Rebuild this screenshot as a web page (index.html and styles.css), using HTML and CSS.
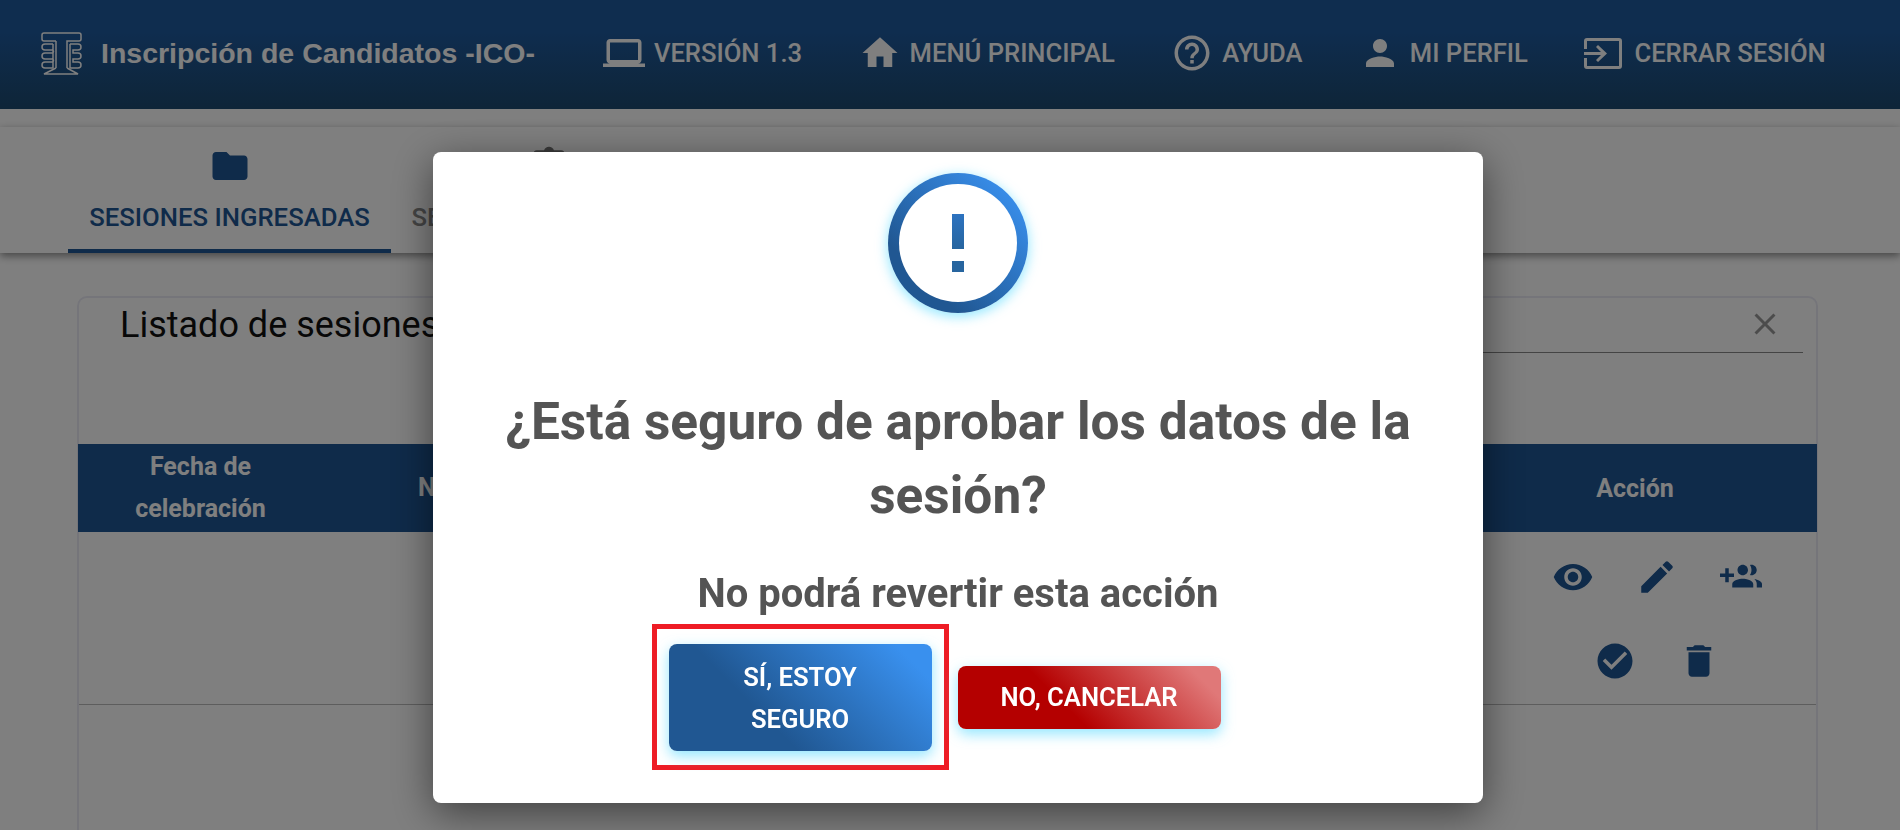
FILE: index.html
```html
<!DOCTYPE html>
<html lang="es">
<head>
    <meta charset="UTF-8">
    <meta name="viewport" content="width=device-width, initial-scale=1.0">
    <title>Inscripción de Candidatos -ICO-</title>
    <link rel="stylesheet" href="styles.css">
</head>
<body>
    <!-- Barra superior -->
    <header class="topbar">
        <div class="brand">
            <svg class="brand-logo" viewBox="0 0 41 43">
                <path d="M15 9H3Q1 9 1 7V3Q1 1 3 1H38Q40 1 40 3V7Q40 9 38 9H26V36M15 9V36"/>
                <path d="M12 12H4a3 3 0 0 0 0 6h7a1.5 1.5 0 0 1 0 3H4a3 3 0 0 0 0 6h7a1.5 1.5 0 0 1 0 3H4a3 3 0 0 0 0 6h8V12"/>
                <path d="M29 12h8a3 3 0 0 1 0 6h-5v3h5a3 3 0 0 1 0 6h-5v3h5a3 3 0 0 1 0 6h-8V12"/>
                <path d="M15 36L3 42H37L26 36"/>
            </svg>
            <span class="brand-name">Inscripción de Candidatos -ICO-</span>
        </div>
        <nav class="topnav">
            <a class="topnav-item"><svg viewBox="0 0 24 24"><path d="M20 18c1.1 0 2-.9 2-2V6c0-1.1-.9-2-2-2H4c-1.1 0-2 .9-2 2v10c0 1.1.9 2 2 2H0v2h24v-2h-4zM4 6h16v10H4V6z"/></svg>VERSIÓN 1.3</a>
            <a class="topnav-item"><svg viewBox="0 0 24 24"><path d="M10 20v-6h4v6h5v-8h3L12 3 2 12h3v8z"/></svg>MENÚ PRINCIPAL</a>
            <a class="topnav-item"><svg viewBox="0 0 24 24"><path d="M11 18h2v-2h-2v2zm1-16C6.48 2 2 6.48 2 12s4.48 10 10 10 10-4.48 10-10S17.52 2 12 2zm0 18c-4.41 0-8-3.59-8-8s3.59-8 8-8 8 3.59 8 8-3.59 8-8 8zm0-14c-2.21 0-4 1.79-4 4h2c0-1.1.9-2 2-2s2 .9 2 2c0 2-3 1.75-3 5h2c0-2.25 3-2.5 3-5 0-2.21-1.79-4-4-4z"/></svg>AYUDA</a>
            <a class="topnav-item"><svg viewBox="0 0 24 24"><path d="M12 12c2.21 0 4-1.79 4-4s-1.79-4-4-4-4 1.79-4 4 1.79 4 4 4zm0 2c-2.67 0-8 1.34-8 4v2h16v-2c0-2.66-5.33-4-8-4z"/></svg>MI PERFIL</a>
            <a class="topnav-item"><svg class="exit-icon" viewBox="0 0 38 31"><path d="M0 11V3a3 3 0 0 1 3-3h32a3 3 0 0 1 3 3v25a3 3 0 0 1-3 3H3a3 3 0 0 1-3-3v-8h3v8h32V3H3v8zM0 14h17l-5-5 2-2 9 8.500-9 8.500-2-2 5-5H0z"/></svg>CERRAR SESIÓN</a>
        </nav>
    </header>

    <!-- Pestañas -->
    <div class="tabs">
        <a class="tab tab-active">
            <svg viewBox="0 0 24 24"><path d="M10 4H4c-1.100 0-2 .9-2 2v12c0 1.100.9 2 2 2h16c1.100 0 2-.9 2-2V8c0-1.100-.9-2-2-2h-8l-2-2z"/></svg>
            SESIONES INGRESADAS
        </a>
        <a class="tab">
            <svg viewBox="0 0 24 24"><path d="M19 3h-4.180C14.400 1.840 13.300 1 12 1s-2.400.84-2.820 2H5c-1.100 0-2 .9-2 2v14c0 1.100.9 2 2 2h14c1.100 0 2-.9 2-2V5c0-1.100-.9-2-2-2z"/></svg>
            SESIONES APROBADAS
        </a>
        <a class="tab">
            <svg viewBox="0 0 24 24"><path d="M12 12c2.210 0 4-1.790 4-4s-1.790-4-4-4-4 1.790-4 4 1.790 4 4 4zm0 2c-2.670 0-8 1.340-8 4v2h16v-2c0-2.660-5.330-4-8-4z"/></svg>
            CANDIDATOS
        </a>
    </div>

    <!-- Listado -->
    <section class="card">
        <div class="card-top">
            <h2 class="card-title">Listado de sesiones</h2>
            <div class="search">
                <svg viewBox="0 0 24 24"><path d="M19 6.410L17.590 5 12 10.590 6.410 5 5 6.410 10.590 12 5 17.590 6.410 19 12 13.410 17.590 19 19 17.590 13.410 12z"/></svg>
            </div>
        </div>
        <div class="table-head">
            <div class="col-date">Fecha de celebración</div>
            <div class="col-main">Número de sesión</div>
            <div class="col-action">Acción</div>
        </div>
        <div class="table-row">
            <div class="row-actions">
                <div class="action-line">
                    <svg class="action-icon" viewBox="0 0 24 24"><path d="M12 4.500C7 4.500 2.730 7.610 1 12c1.730 4.390 6 7.500 11 7.500s9.270-3.110 11-7.500c-1.730-4.390-6-7.500-11-7.500zM12 17c-2.760 0-5-2.240-5-5s2.240-5 5-5 5 2.240 5 5-2.240 5-5 5zm0-8c-1.660 0-3 1.340-3 3s1.340 3 3 3 3-1.340 3-3-1.340-3-3-3z"/></svg>
                    <svg class="action-icon" viewBox="0 0 24 24"><path d="M3 17.250V21h3.750L17.810 9.940l-3.750-3.750L3 17.250zM20.710 7.040c.39-.39.39-1.020 0-1.410l-2.340-2.340c-.39-.39-1.020-.39-1.410 0l-1.830 1.830 3.750 3.750 1.830-1.830z"/></svg>
                    <svg class="action-icon" viewBox="0 0 24 24"><path d="M8 10H5V7H3v3H0v2h3v3h2v-3h3v-2zm10 1c1.660 0 2.990-1.340 2.990-3S19.660 5 18 5c-.32 0-.63.05-.91.14.57.81.9 1.790.9 2.860s-.34 2.040-.9 2.860c.28.09.59.14.91.14zm-5 0c1.660 0 2.990-1.340 2.990-3S14.660 5 13 5s-3 1.340-3 3 1.340 3 3 3zm6.620 2.160c.83.73 1.380 1.660 1.380 2.840v2h3v-2c0-1.540-2.370-2.490-4.380-2.840zM13 13c-2 0-6 1-6 3v2h12v-2c0-2-4-3-6-3z"/></svg>
                </div>
                <div class="action-line">
                    <svg class="action-icon" viewBox="0 0 24 24"><path d="M12 2C6.480 2 2 6.480 2 12s4.480 10 10 10 10-4.480 10-10S17.520 2 12 2zm-2 15l-5-5 1.410-1.410L10 14.170l7.590-7.590L19 8l-9 9z"/></svg>
                    <svg class="action-icon" viewBox="0 0 24 24"><path d="M6 19c0 1.100.9 2 2 2h8c1.100 0 2-.9 2-2V7H6v12zM19 4h-3.500l-1-1h-5l-1 1H5v2h14V4z"/></svg>
                </div>
            </div>
        </div>
    </section>

    <!-- Confirmación -->
    <div class="overlay">
        <div class="modal">
            <div class="alert-ring">
                <div class="alert-inner">
                    <span class="alert-bar"></span>
                    <span class="alert-dot"></span>
                </div>
            </div>
            <h2 class="modal-title">¿Está seguro de aprobar los datos de la sesión?</h2>
            <p class="modal-text">No podrá revertir esta acción</p>
            <div class="modal-actions">
                <div class="highlight">
                    <button class="btn btn-confirm">SÍ, ESTOY SEGURO</button>
                </div>
                <button class="btn btn-cancel">NO, CANCELAR</button>
            </div>
        </div>
    </div>
</body>
</html>
```

FILE: styles.css
```css
* {
    box-sizing: border-box;
}

html, body {
    height: 100%;
}

body {
    margin: 0;
    overflow: hidden;
    display: flex;
    flex-direction: column;
    background: #fff;
    font-family: Roboto, "Liberation Sans", sans-serif;
    color: #222;
}

svg {
    fill: currentColor;
    display: block;
    flex-shrink: 0;
}

/* Barra superior */
.topbar {
    height: 109px;
    flex-shrink: 0;
    display: flex;
    align-items: center;
    padding: 0 0 3px 41px;
    background: linear-gradient(180deg, #1e5a9e 0%, #1e5a9e 30%, #1d4a70 100%);
    color: #fff;
}

.brand {
    display: flex;
    align-items: center;
}

.brand-logo {
    width: 41px;
    height: 43px;
    margin-right: 19px;
    fill: none;
    stroke: currentColor;
    stroke-width: 1.5;
}

.brand-name {
    font-family: "Liberation Sans", Arial, sans-serif;
    font-size: 28.5px;
    font-weight: 700;
    white-space: nowrap;
}

.topnav {
    display: flex;
    align-items: center;
    margin-left: 68px;
    gap: 56.500px;
}

.topnav-item {
    display: flex;
    align-items: center;
    gap: 9px;
    font-size: 25.6px;
    font-weight: 500;
    white-space: nowrap;
}

.topnav-item svg {
    width: 42px;
    height: 42px;
}

.topnav-item .exit-icon {
    width: 38px;
    height: 31px;
    margin-right: 3px;
}

/* Pestañas */
.tabs {
    height: 126px;
    flex-shrink: 0;
    margin-top: 18px;
    display: flex;
    padding-left: 68px;
    background: #fff;
    box-shadow: 0 3px 8px rgba(0, 0, 0, 0.45);
}

.tab {
    width: 323px;
    display: flex;
    flex-direction: column;
    align-items: center;
    padding-top: 18px;
    font-size: 25.7px;
    font-weight: 500;
    line-height: 30px;
    white-space: nowrap;
    color: #8a8a8a;
    border-bottom: 4px solid transparent;
}

.tab + .tab {
    width: 316px;
}

.tab svg {
    width: 42px;
    height: 42px;
    margin-bottom: 15px;
    color: #757575;
}

.tab-active {
    color: #1e5694;
    border-bottom-color: #1e5694;
}

.tab-active svg {
    color: #1e5694;
}

/* Listado */
.card {
    flex: 1;
    margin: 43px 82px 0 77px;
    border: 2px solid #ebebf5;
    border-bottom: 0;
    border-radius: 10px 10px 0 0;
}

.card-top {
    height: 146px;
    display: flex;
    align-items: flex-start;
    padding: 7px 13px 0 41px;
}

.card-title {
    margin: 0;
    font-size: 36px;
    font-weight: 400;
    line-height: 40px;
    white-space: nowrap;
    color: #111;
}

.search {
    flex: 1;
    height: 48px;
    display: flex;
    justify-content: flex-end;
    padding: 1px 20px 0 0;
    border-bottom: 1px solid #888;
    color: #999;
}

.search svg {
    width: 36px;
    height: 36px;
}

.table-head {
    height: 88px;
    margin: 0 -1px;
    display: flex;
    align-items: center;
    background: #1e5694;
    color: #fff;
    font-size: 25px;
    font-weight: 700;
    line-height: 42px;
    text-align: center;
}

.col-date {
    width: 245px;
    padding: 0 40px;
}

.col-main {
    flex: 1;
    text-align: left;
    padding-left: 95px;
}

.col-action {
    width: 364px;
    padding-top: 2px;
}

.table-row {
    height: 173px;
    display: flex;
    justify-content: flex-end;
    border-bottom: 1px solid #bbb;
}

.row-actions {
    width: 318px;
    padding-top: 24px;
    display: flex;
    flex-direction: column;
    gap: 42px;
    color: #1e5694;
}

.action-line {
    display: flex;
    justify-content: center;
    gap: 42px;
}

.action-icon {
    width: 42px;
    height: 42px;
}

/* Confirmación */
.overlay {
    position: fixed;
    top: 0;
    left: 0;
    width: 100%;
    height: 100%;
    display: flex;
    justify-content: center;
    align-items: flex-start;
    padding: 152px 0 0 16px;
    background: rgba(0, 0, 0, 0.5);
}

.modal {
    width: 1050px;
    height: 651px;
    display: flex;
    flex-direction: column;
    align-items: center;
    padding-top: 21px;
    background: #fff;
    border-radius: 8px;
    box-shadow: 0 10px 40px rgba(0, 0, 0, 0.5);
}

.alert-ring {
    width: 140px;
    height: 140px;
    padding: 11px;
    border-radius: 50%;
    background: linear-gradient(45deg, #205792 0%, #205792 25%, #3990ee 90%);
    box-shadow: 0 3px 12px 1px rgba(120, 225, 255, 0.75);
}

.alert-inner {
    width: 100%;
    height: 100%;
    display: flex;
    flex-direction: column;
    align-items: center;
    justify-content: center;
    gap: 12px;
    border-radius: 50%;
    background: #fff;
}

.alert-bar {
    width: 12px;
    height: 35px;
    background: linear-gradient(180deg, #2d73c0, #27659f);
}

.alert-dot {
    width: 12px;
    height: 11px;
    background: #27659f;
}

.modal-title {
    width: 960px;
    margin: 72px 0 0;
    font-size: 51.4px;
    font-weight: 700;
    line-height: 74px;
    text-align: center;
    color: #545454;
}

.modal-text {
    margin: 37px 0 0;
    font-size: 40px;
    font-weight: 700;
    line-height: 48px;
    color: #545454;
}

.modal-actions {
    display: flex;
    align-items: center;
    margin: 6px 44px 0 0;
    gap: 9px;
}

.highlight {
    padding: 15px 12px 14px;
    border: 5px solid #ee1c25;
}

.btn {
    border: none;
    border-radius: 8px;
    font-family: Roboto, "Liberation Sans", sans-serif;
    font-size: 25.6px;
    font-weight: 600;
    line-height: 42px;
    color: #fff;
    box-shadow: 0 5px 14px rgba(100, 220, 255, 0.7);
}

.btn-confirm {
    display: block;
    width: 263px;
    height: 107px;
    padding: 0 50px;
    background: linear-gradient(45deg, #205792 0%, #205792 35%, #3990ee 90%);
}

.btn-cancel {
    width: 263px;
    height: 63px;
    background: linear-gradient(45deg, #b40000 0%, #b40000 40%, #e07878 90%);
}
```
